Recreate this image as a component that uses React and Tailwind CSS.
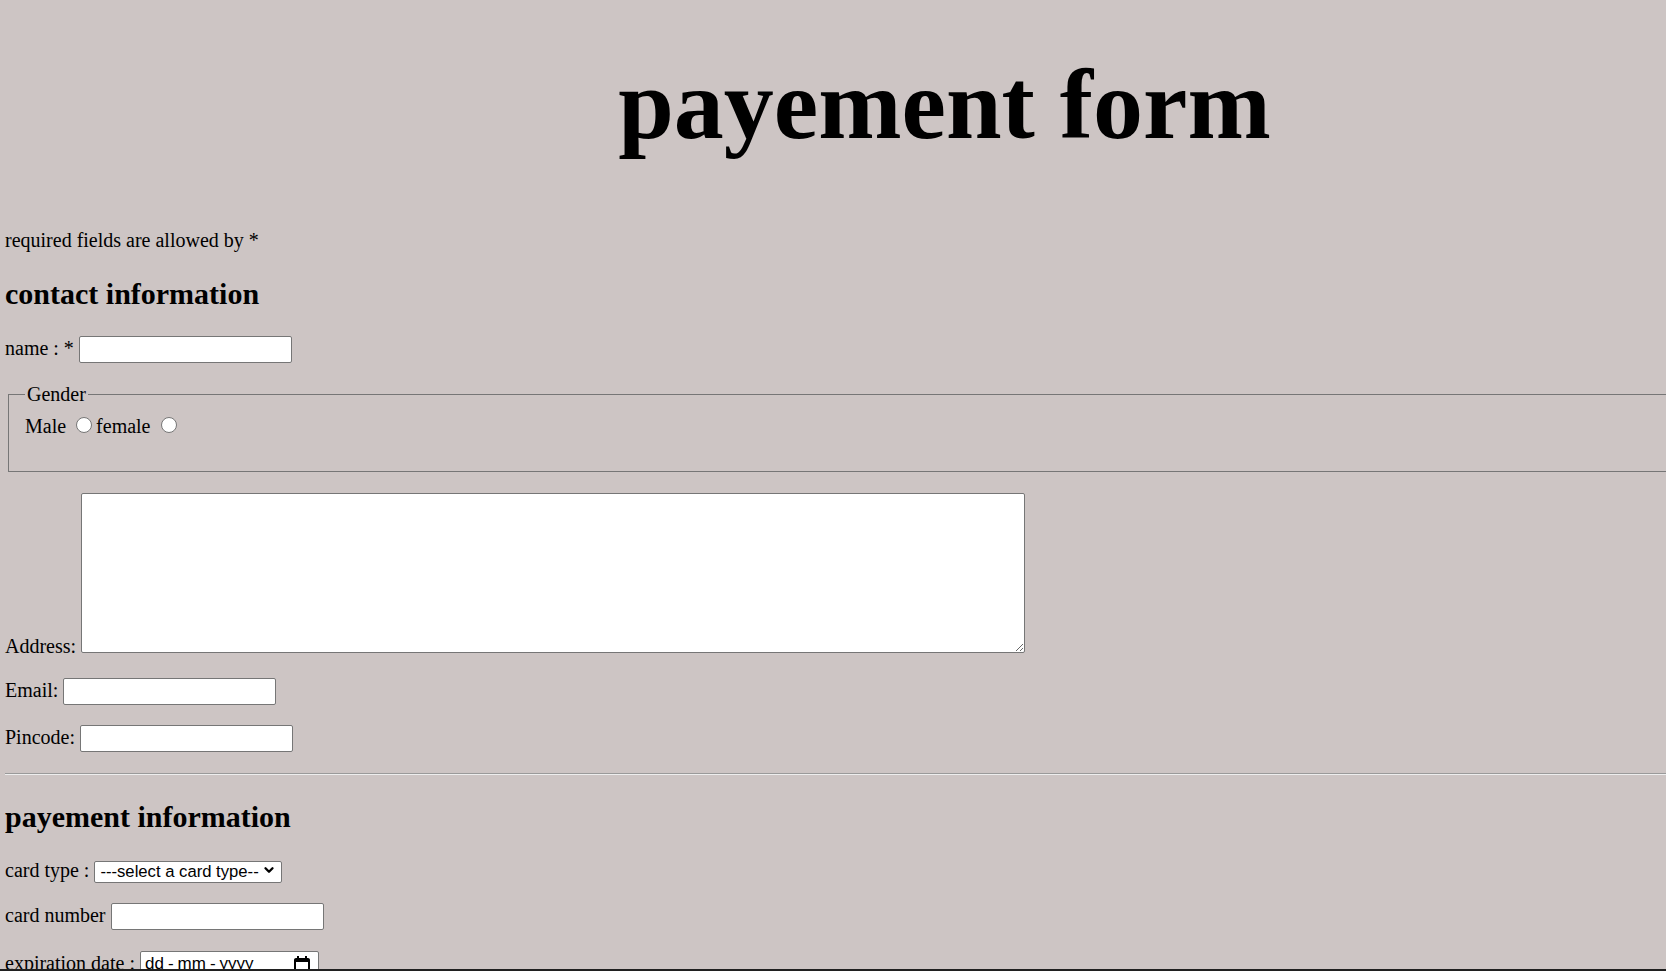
import { ChevronDown } from "lucide-react";

const inputCls =
  "h-[27px] w-[213px] rounded-[2px] border border-[#767676] bg-white px-[2px] py-[1px] align-baseline font-['Liberation_Sans',Arial,sans-serif] text-[16.67px] leading-[normal] outline-none";

const radioCls =
  "ml-[5px] mr-[4px] h-[16px] w-[16px] appearance-none rounded-full border border-[#767676] bg-white align-baseline";

function Row({ label, className = "my-[20px]", children }) {
  return (
    <p className={className}>
      {label} {children}
    </p>
  );
}

function CalendarIcon() {
  return (
    <svg width="16" height="16" viewBox="0 0 16 16" fill="currentColor">
      <path d="M3 0h2v2h6V0h2v2h1c1.1 0 2 .9 2 2v10c0 1.1-.9 2-2 2H2c-1.1 0-2-.9-2-2V4c0-1.1.9-2 2-2h1V0zm-1 6v8h12V6H2z" />
    </svg>
  );
}

export default function App() {
  return (
    <div className="relative h-screen overflow-hidden bg-[#cdc5c4] font-['Liberation_Serif','Times_New_Roman',serif] text-[20px] leading-[normal] text-black">
      <div className="w-[1889px] px-[5px] pt-px">
        <h1 className="mb-[67px] mt-[46px] text-center text-[100px] font-bold leading-[normal]">payement form</h1>

        <p className="my-[20px]">required fields are allowed by *</p>

        <h2 className="my-[25px] text-[30px] font-bold leading-[normal]">contact information</h2>

        <Row label="name : *">
          <input type="text" name="name" className={inputCls} />
        </Row>

        <fieldset className="mx-[3px] mb-[21px] border border-[#767676] px-[16px] pb-[33px] pt-[9px]">
          <legend className="px-[2px]">Gender</legend>
          Male <input type="radio" name="gender" className={radioCls} />female{" "}
          <input type="radio" name="gender" className={radioCls} />
        </fieldset>

        <Row label="Address:">
          <textarea name="address" className="h-[160px] w-[944px] rounded-[2px] border border-[#767676] bg-white align-baseline outline-none" />
        </Row>

        <Row label="Email:">
          <input type="email" name="email" className={inputCls} />
        </Row>

        <Row label="Pincode:">
          <input type="text" name="pincode" className={inputCls} />
        </Row>

        <hr className="mb-[10px] mt-[21px] border-t border-b border-t-[#9a9a9a] border-b-[#eeeeee]" />

        <h2 className="my-[25px] text-[30px] font-bold leading-[normal]">payement information</h2>

        <Row label="card type :">
          <span className="relative inline-block align-baseline">
            <select
              name="cardType"
              className="h-[22px] w-[188px] appearance-none rounded-[2px] border border-[#767676] bg-white pl-[5px] align-baseline font-['Liberation_Sans',Arial,sans-serif] text-[16.67px] leading-[normal] outline-none"
            >
              <option>---select a card type--</option>
              <option>Visa</option>
              <option>Mastercard</option>
              <option>Rupay</option>
            </select>
            <ChevronDown
              size={14}
              strokeWidth={4}
              className="pointer-events-none absolute right-[6px] top-[4px]"
            />
          </span>
        </Row>

        <Row label="card number">
          <input type="text" name="cardNumber" className={inputCls} />
        </Row>

        <Row label="expiration date :" className="mb-[20px] mt-[21px]">
          <span className="inline-flex h-[27px] w-[179px] items-center justify-between rounded-[2px] border border-[#767676] bg-white pl-[4px] pr-[8px] align-baseline font-['Liberation_Sans',Arial,sans-serif] text-[17px] leading-[normal]">
            <span>
              dd<span className="mx-[4px]">-</span>mm<span className="mx-[4px]">-</span>yyyy
            </span>
            <CalendarIcon />
          </span>
        </Row>
      </div>

      <div className="absolute bottom-0 left-0 right-0 h-[2px] bg-[#202020]" />
    </div>
  );
}
